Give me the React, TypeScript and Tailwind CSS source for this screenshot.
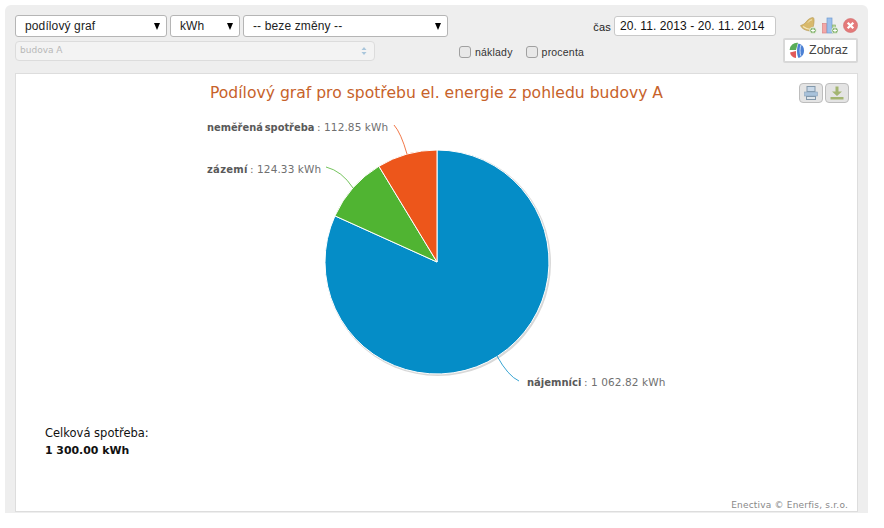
const slices = [
  { name: 'nájemníci', value: 1062.82, color: '#058dc7' },
  { name: 'zázemí', value: 124.33, color: '#50b432' },
  { name: 'neměřená spotřeba', value: 112.85, color: '#ed561b' },
]

const cx = 437
const cy = 262
const r = 112

function piePaths() {
  const total = slices.reduce((sum, s) => sum + s.value, 0)
  let angle = 0
  return slices.map(s => {
    const start = angle
    angle += (s.value / total) * Math.PI * 2
    const x1 = cx + r * Math.sin(start)
    const y1 = cy - r * Math.cos(start)
    const x2 = cx + r * Math.sin(angle)
    const y2 = cy - r * Math.cos(angle)
    const large = angle - start > Math.PI ? 1 : 0
    return { ...s, d: `M${cx} ${cy}L${x1} ${y1}A${r} ${r} 0 ${large} 1 ${x2} ${y2}Z` }
  })
}

function FakeSelect({ label, className }: { label: string; className: string }) {
  return (
    <div className={`h-[22px] flex items-center justify-between bg-white border border-[#b5b5b5] rounded-[3px] text-[12px] tracking-[0.12px] text-[#222] ${className}`}>
      <span>{label}</span>
      <span className="w-0 h-0 border-x-[3.5px] border-x-transparent border-t-[7px] border-t-black" />
    </div>
  )
}

function Check({ label }: { label: string }) {
  return (
    <div className="flex items-center gap-[4px] text-[10.5px] tracking-[0.2px] text-[#333]">
      <span className="w-[12px] h-[12px] rounded-[3px] border border-[#a0a0a0] bg-[#e8e8e8]" />
      <span className="mt-[2px]">{label}</span>
    </div>
  )
}

function PlusBadge() {
  return (
    <>
      <circle cx="13" cy="13.5" r="3.3" fill="#86b56f" stroke="#f4f4f4" strokeWidth="0.8" />
      <path d="M13 11.600v3.800M11.100 13.500h3.800" stroke="#fff" strokeWidth="1.100" />
    </>
  )
}

function BellIcon() {
  return (
    <svg width="17" height="17" viewBox="0 0 17 17">
      <path d="M13 .6C10 .6 7.500 3 6 5 4.500 7 2.500 8 .6 8.500c1 3 5 5.500 11 5.500 1.500-3 2.500-7 2.500-10.500 0-1.500-.4-2.900-1.100-2.900z" fill="#d8b96c" stroke="#b3964f" strokeWidth="0.6" />
      <path d="M3 9.500c2 1.500 5 3 8 3" stroke="#f3e6bd" strokeWidth="1.200" fill="none" />
      <path d="M8 5.500C9 4 10.500 3 12 2.800" stroke="#f3e6bd" strokeWidth="1" fill="none" />
      <PlusBadge />
    </svg>
  )
}

function BarsIcon() {
  return (
    <svg width="16" height="17" viewBox="0 0 16 17">
      <rect x="0.500" y="6.500" width="4" height="9.500" fill="#f2a7a7" stroke="#dd8484" strokeWidth="0.7" />
      <rect x="5" y="1" width="5" height="15" fill="#9cc0ec" stroke="#6f9bd2" strokeWidth="0.7" />
      <rect x="10.500" y="8" width="3" height="8" fill="#b5d69c" stroke="#8db46f" strokeWidth="0.7" />
      <PlusBadge />
    </svg>
  )
}

function CloseIcon() {
  return (
    <svg width="15" height="15" viewBox="0 0 15 15">
      <circle cx="7.500" cy="7.500" r="7" fill="#e47a7a" stroke="#cf6a6a" strokeWidth="0.6" />
      <path d="M4.700 4.700l5.600 5.600M10.300 4.700l-5.600 5.600" stroke="#fff" strokeWidth="2.300" />
    </svg>
  )
}

function PieIcon() {
  return (
    <svg width="17" height="17" viewBox="0 0 17 17">
      <path d="M7 8L9 .8A7.500 7.500 0 0 0 .6 8z" fill="#58ad58" />
      <path d="M9.500 1.500a7.500 7.500 0 0 1 0 14.500C7.500 12 7.500 6 9.500 1.500z" fill="#4b80d4" />
      <path d="M7 9v7A7 7 0 0 1 1 10.500z" fill="#e25a5a" />
      <path d="M12 3c-1.300 3.500-1.300 8 0 11.500" stroke="#d8e6fa" strokeWidth="0.9" fill="none" />
    </svg>
  )
}

function PrintButton() {
  return (
    <div className="w-[24px] h-[20px] flex items-center justify-center rounded-[4px] border border-[#bdbdbd] bg-[#e4e4e4]">
      <svg width="14" height="14" viewBox="0 0 14 14">
        <rect x="3" y="0.500" width="8" height="5" fill="#c8d8e8" stroke="#8298ab" />
        <rect x="0.500" y="6" width="13" height="4" fill="#a8c2db" stroke="#8ca6bd" strokeWidth="0.6" />
        <rect x="2.500" y="10.500" width="9" height="3" fill="#dfe6ec" stroke="#8298ab" />
      </svg>
    </div>
  )
}

function DownloadButton() {
  return (
    <div className="w-[24px] h-[20px] flex items-center justify-center rounded-[4px] border border-[#bdbdbd] bg-[#e4e4e4]">
      <svg width="14" height="14" viewBox="0 0 14 14">
        <path d="M5.500 0.500h3v5H12L7 10 2 5.500h3.500z" fill="#a3b571" />
        <rect x="0.500" y="11" width="13" height="2.500" fill="#a3b571" />
      </svg>
    </div>
  )
}

const boldLabel = { fontSize: 10, fontWeight: 'bold', fill: '#595959' } as const

export default function App() {
  const font = { fontFamily: '"DejaVu Sans", sans-serif' }
  return (
    <div className="w-[884px] h-[528px] bg-white pl-[5px] pt-[5px] font-['Liberation_Sans',sans-serif]">
      <div className="w-[863px] h-[508px] bg-[#eeeeee] rounded-t-[6px] px-[10px] pt-[10px]">
        <div className="flex h-[58px]">
          <div className="w-[360px]">
            <div className="flex gap-[3px] w-[440px]">
              <FakeSelect label="podílový graf" className="w-[152px] pl-[9px] pr-[6px]" />
              <FakeSelect label="kWh" className="w-[70px] pl-[9px] pr-[6px]" />
              <FakeSelect label="-- beze změny --" className="w-[205px] pl-[9px] pr-[6px]" />
            </div>
            <div className="mt-[4px] h-[20px] flex items-center justify-between pl-[4px] pr-[7px] rounded-[4px] border border-[#dcdcdc] bg-[#f3f3f3] text-[9px] text-[#b8b8b8]" style={font}>
              budova A
              <svg width="6" height="10" viewBox="0 0 6 10"><path d="M3 1l2.500 3h-5zM3 9L.5 6h5z" fill="#a9c6dc" /></svg>
            </div>
          </div>
          <div className="ml-[84px] mt-[30px] flex gap-[13px] h-[14px]">
            <Check label="náklady" />
            <Check label="procenta" />
          </div>
          <div className="ml-auto flex">
            <div className="flex items-start gap-[3px] mt-[1px]">
              <span className="text-[11px] tracking-[0.2px] text-[#222] mt-[3px]">čas</span>
              <div className="w-[162px] h-[20px] bg-white border border-[#c9c9c9] rounded-[3px] pl-[5px] flex items-center text-[12px] tracking-[0.08px] text-[#111]">20. 11. 2013 - 20. 11. 2014</div>
            </div>
            <div className="ml-[8px] w-[74px]">
              <div className="flex items-center gap-[5px] h-[21px] pl-[16px]">
                <BellIcon />
                <BarsIcon />
                <CloseIcon />
              </div>
              <div className="mt-[2px] -ml-[1px] w-[75px] h-[25px] flex items-center gap-[3px] pl-[4px] bg-white border-2 border-[#d8d8d8] rounded-[2px] text-[12.500px] text-[#444]">
                <PieIcon />
                Zobraz
              </div>
            </div>
          </div>
        </div>
        <div className="w-[843px] h-[439px] flex flex-col bg-white border border-[#dddddd] relative" style={font}>
          <h1 className="relative pt-[9px] text-center text-[15.600px] leading-[20px] font-normal text-[#c7622a]">Podílový graf pro spotřebu el. energie z pohledu budovy A</h1>
          <div className="absolute top-[9px] right-[8px] flex gap-[2px]">
            <PrintButton />
            <DownloadButton />
          </div>
          <svg className="absolute left-0 top-0" width="841" height="437" viewBox="16 74 841 437">
            <circle cx={cx + 1} cy={cy + 1} r={r + 1} fill="#d8d8d8" />
            {piePaths().map(p => (
              <path key={p.name} d={p.d} fill={p.color} stroke="#fff" strokeWidth="1" />
            ))}
            <path d="M394 125Q401 133 407 154" fill="none" stroke="#ed561b" strokeWidth="0.8" />
            <path d="M326 167Q342 171 353 188" fill="none" stroke="#50b432" strokeWidth="0.8" />
            <path d="M497 356Q508 376 519 381" fill="none" stroke="#058dc7" strokeWidth="0.8" />
            <text y="131" fontSize="10.500" letterSpacing="0.1" fill="#707070">
              <tspan x="207" {...boldLabel} fontSize="9.850" wordSpacing="-1.500" letterSpacing="0">neměřená spotřeba</tspan>
              <tspan x="317">: 112.85 kWh</tspan>
            </text>
            <text y="173" fontSize="10.500" letterSpacing="0.1" fill="#707070">
              <tspan x="207" {...boldLabel} letterSpacing="0.3">zázemí</tspan>
              <tspan x="250">: 124.33 kWh</tspan>
            </text>
            <text y="386" fontSize="10.500" letterSpacing="0.1" fill="#707070">
              <tspan x="527" {...boldLabel} letterSpacing="0">nájemníci</tspan>
              <tspan x="584">: 1 062.82 kWh</tspan>
            </text>
          </svg>
          <div className="relative ml-[29px] mt-[321px] text-[11.500px] leading-[18px] text-[#111]">
            <div>Celková spotřeba:</div>
            <div className="font-bold text-[10.900px]">1 300.00 kWh</div>
          </div>
          <div className="relative mt-auto mr-[9px] text-right text-[9px] leading-[12px] tracking-[0.2px] text-[#888]">Enectiva © Enerfis, s.r.o.</div>
        </div>
      </div>
    </div>
  )
}
